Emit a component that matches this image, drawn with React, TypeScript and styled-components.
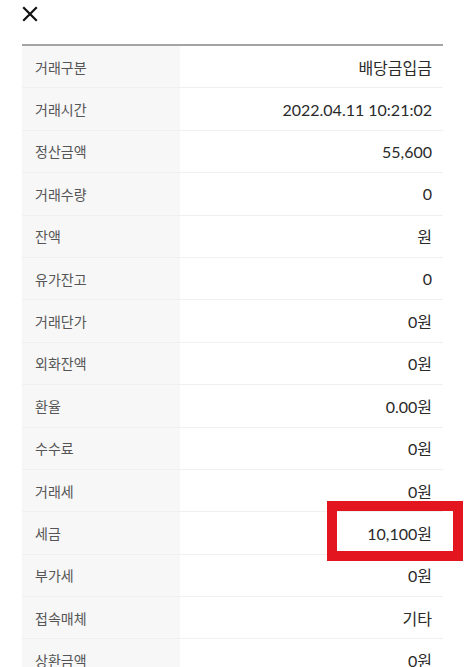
import React from "react";
import styled, { createGlobalStyle } from "styled-components";

const GlobalStyle = createGlobalStyle`
  body {
    margin: 0;
    background: #fff;
    font-family: Lato, "Noto Sans CJK KR", sans-serif;
  }
`;

const rows: [string, string][] = [
  ["거래구분", "배당금입금"],
  ["거래시간", "2022.04.11 10:21:02"],
  ["정산금액", "55,600"],
  ["거래수량", "0"],
  ["잔액", "원"],
  ["유가잔고", "0"],
  ["거래단가", "0원"],
  ["외화잔액", "0원"],
  ["환율", "0.00원"],
  ["수수료", "0원"],
  ["거래세", "0원"],
  ["세금", "10,100원"],
  ["부가세", "0원"],
  ["접속매체", "기타"],
  ["상환금액", "0원"],
];

const App = () => {
  return (
    <Page>
      <GlobalStyle />
      <TopBar>
        <CloseButton aria-label="close">
          <svg width="16" height="16" viewBox="0 0 16 16">
            <path d="M2 2L14 14M14 2L2 14" stroke="#111" strokeWidth="2.2" strokeLinecap="square" />
          </svg>
        </CloseButton>
      </TopBar>
      <Table>
        {rows.map(([label, value]) => (
          <Row key={label}>
            <Label>{label}</Label>
            <Value>{value}</Value>
            {label === "세금" && <Highlight />}
          </Row>
        ))}
      </Table>
    </Page>
  );
};

export default App;

const Page = styled.div`
  width: 466px;
  height: 667px;
  overflow: hidden;
`;
const TopBar = styled.div`
  height: 44px;
  padding-left: 22px;
  display: flex;
  align-items: flex-start;
`;
const CloseButton = styled.button`
  border: 0;
  background: none;
  padding: 0;
  margin-top: 6px;
  width: 16px;
  height: 16px;
  display: flex;
`;
const Table = styled.div`
  margin: 0 23px 0 22px;
  border-top: 2px solid #a4a4a4;
`;
const Row = styled.div`
  position: relative;
  display: grid;
  grid-template-columns: 158px 1fr;
  height: 42.4px;
  box-sizing: border-box;
  border-bottom: 1px solid #f0f0f0;
`;
const Label = styled.div`
  background: #f7f7f7;
  display: flex;
  align-items: center;
  padding-left: 13px;
  font-size: 14px;
  color: #555;
`;
const Value = styled.div`
  display: flex;
  align-items: center;
  justify-content: flex-end;
  padding-right: 11px;
  font-size: 16px;
  color: #2a2a2a;
`;
const Highlight = styled.div`
  position: absolute;
  left: 305px;
  top: -11px;
  width: 136px;
  height: 60px;
  box-sizing: border-box;
  border: 10px solid #e3161f;
  pointer-events: none;
`;
